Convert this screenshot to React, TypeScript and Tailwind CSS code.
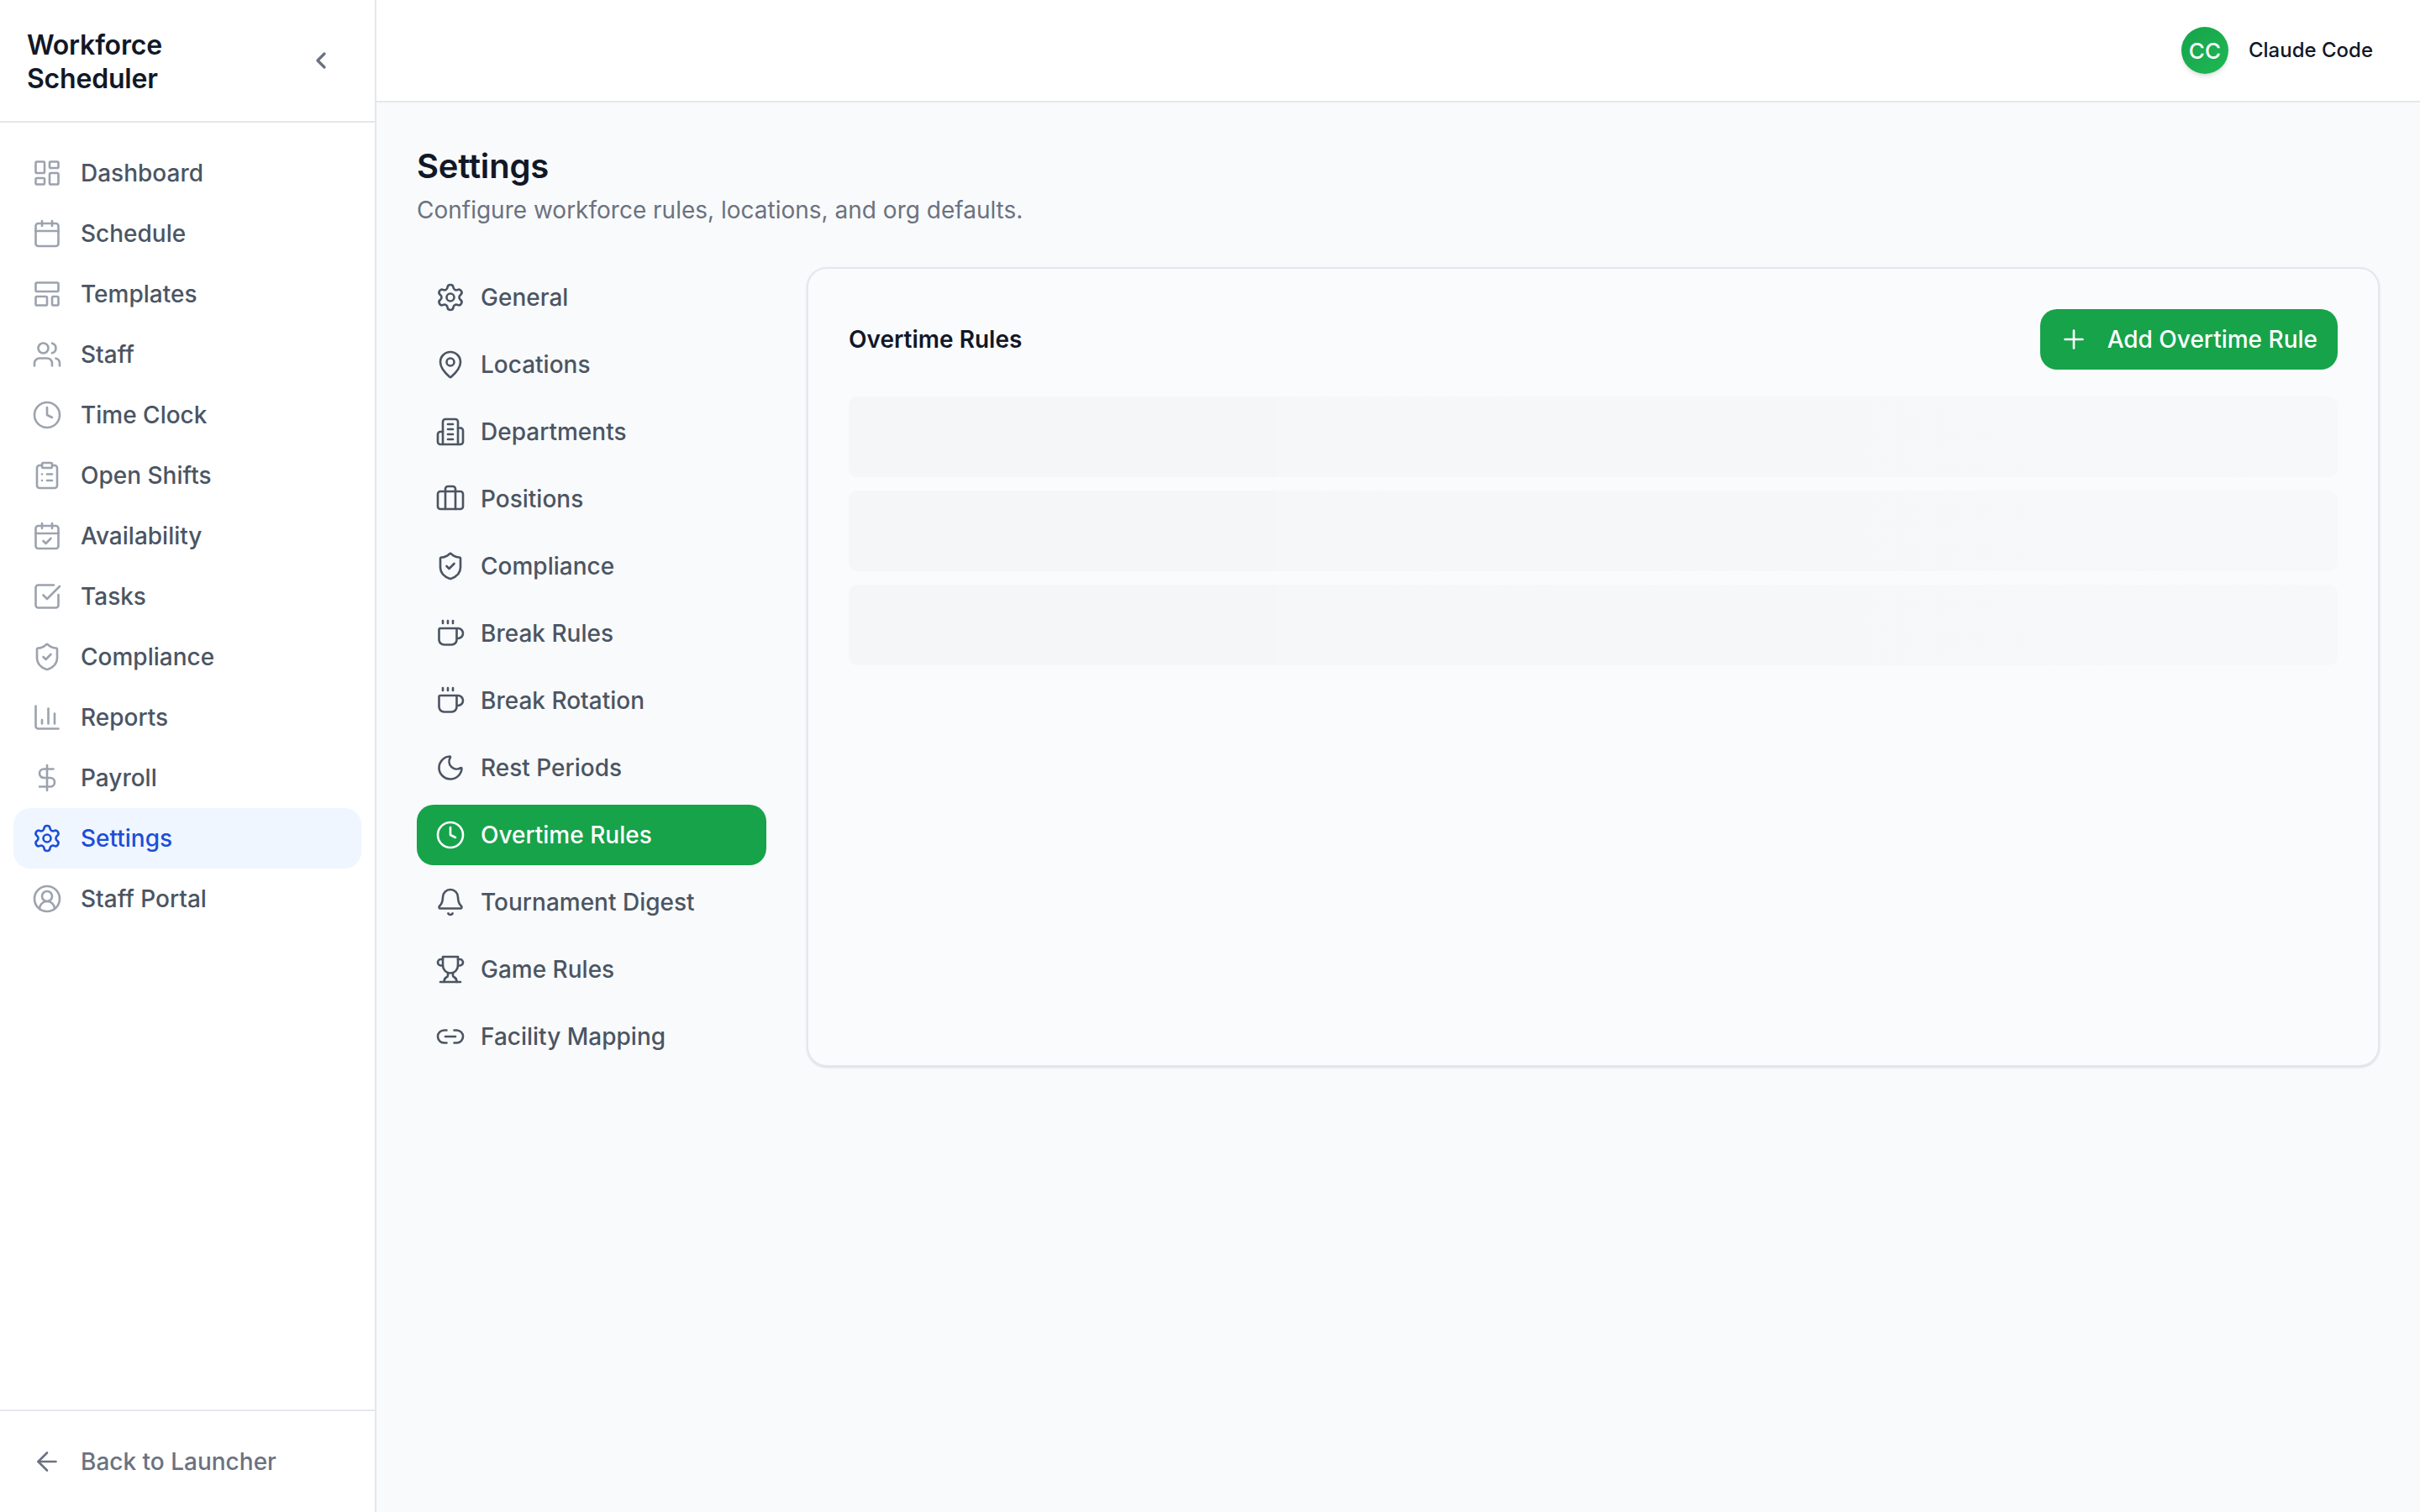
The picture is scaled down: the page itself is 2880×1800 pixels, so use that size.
import {
  ArrowLeft,
  Bell,
  Briefcase,
  Calendar,
  CalendarCheck,
  ChartColumn,
  ChevronLeft,
  CircleUserRound,
  ClipboardList,
  Clock,
  Coffee,
  DollarSign,
  LayoutDashboard,
  LayoutTemplate,
  Link2,
  MapPin,
  Moon,
  Plus,
  Settings,
  ShieldCheck,
  SquareCheckBig,
  Users,
} from "lucide-react";

// older lucide shapes, the installed package has redrawn these two
function TowerIcon({ size = 36, strokeWidth = 2 }: { size?: number; strokeWidth?: number }) {
  return (
    <svg width={size} height={size} viewBox="0 0 24 24" fill="none" stroke="currentColor" strokeWidth={strokeWidth} strokeLinecap="round" strokeLinejoin="round">
      <path d="M6 22V4a2 2 0 0 1 2-2h8a2 2 0 0 1 2 2v18Z" />
      <path d="M6 12H4a2 2 0 0 0-2 2v6a2 2 0 0 0 2 2h2" />
      <path d="M18 9h2a2 2 0 0 1 2 2v9a2 2 0 0 1-2 2h-2" />
      <path d="M10 6h4" />
      <path d="M10 10h4" />
      <path d="M10 14h4" />
      <path d="M10 18h4" />
    </svg>
  );
}

function CupIcon({ size = 36, strokeWidth = 2 }: { size?: number; strokeWidth?: number }) {
  return (
    <svg width={size} height={size} viewBox="0 0 24 24" fill="none" stroke="currentColor" strokeWidth={strokeWidth} strokeLinecap="round" strokeLinejoin="round">
      <path d="M6 9H4.5a2.5 2.5 0 0 1 0-5H6" />
      <path d="M18 9h1.5a2.5 2.5 0 0 0 0-5H18" />
      <path d="M4 22h16" />
      <path d="M10 14.66V17c0 .55-.47.98-.97 1.21C7.85 18.75 7 20.24 7 22" />
      <path d="M14 14.66V17c0 .55.47.98.97 1.21C16.15 18.75 17 20.24 17 22" />
      <path d="M18 2H6v7a6 6 0 0 0 12 0V2Z" />
    </svg>
  );
}

const navItems = [
  { label: "Dashboard", icon: LayoutDashboard },
  { label: "Schedule", icon: Calendar },
  { label: "Templates", icon: LayoutTemplate },
  { label: "Staff", icon: Users },
  { label: "Time Clock", icon: Clock },
  { label: "Open Shifts", icon: ClipboardList },
  { label: "Availability", icon: CalendarCheck },
  { label: "Tasks", icon: SquareCheckBig },
  { label: "Compliance", icon: ShieldCheck },
  { label: "Reports", icon: ChartColumn },
  { label: "Payroll", icon: DollarSign },
  { label: "Settings", icon: Settings, active: true },
  { label: "Staff Portal", icon: CircleUserRound },
];

const tabs = [
  { label: "General", icon: Settings },
  { label: "Locations", icon: MapPin },
  { label: "Departments", icon: TowerIcon },
  { label: "Positions", icon: Briefcase },
  { label: "Compliance", icon: ShieldCheck },
  { label: "Break Rules", icon: Coffee },
  { label: "Break Rotation", icon: Coffee },
  { label: "Rest Periods", icon: Moon },
  { label: "Overtime Rules", icon: Clock, active: true },
  { label: "Tournament Digest", icon: Bell },
  { label: "Game Rules", icon: CupIcon },
  { label: "Facility Mapping", icon: Link2 },
];

export default function App() {
  return (
    <div className="flex h-[1800px] w-[2880px] overflow-hidden bg-[#f9fafb] font-['Inter',sans-serif] antialiased">
      {/* SIDEBAR */}
      <aside className="flex h-full w-[448px] shrink-0 flex-col border-r-2 border-[#e5e7eb] bg-white">
        <div className="flex h-[146px] items-center justify-between border-b-2 border-[#e5e7eb] px-8">
          <h1 className="w-[220px] pt-1 text-[32px] leading-[40px] font-semibold tracking-[-0.2px] text-[#111827]">
            Workforce Scheduler
          </h1>
          <button className="rounded-2xl p-4 text-[#6b7280]">
            <ChevronLeft size={32} strokeWidth={2.5} />
          </button>
        </div>

        <nav className="flex-1 px-4 py-6">
          {navItems.map((item) => (
            <div
              key={item.label}
              className={
                item.active
                  ? "flex h-[72px] items-center gap-[22px] rounded-[20px] bg-[#eff6ff] px-[22px] text-[28px] font-medium text-[#1d4ed8]"
                  : "flex h-[72px] items-center gap-[22px] rounded-[20px] px-[22px] text-[28px] font-medium text-[#4b5563]"
              }
            >
              <item.icon
                size={36}
                strokeWidth={1.75}
                className={item.active ? "text-[#1d4ed8]" : "text-[#9ca3af]"}
              />
              {item.label}
            </div>
          ))}
        </nav>

        <div className="border-t-2 border-[#e5e7eb] px-4 py-6">
          <div className="flex h-[72px] items-center gap-[22px] px-[22px] text-[28px] font-medium text-[#6b7280]">
            <ArrowLeft size={36} strokeWidth={1.75} />
            Back to Launcher
          </div>
        </div>
      </aside>

      <div className="flex min-w-0 flex-1 flex-col">
        {/* HEADER */}
        <header className="flex h-[122px] items-center justify-end gap-6 border-b-2 border-[#e5e7eb] bg-white px-[56px]">
          <div className="flex h-14 w-14 items-center justify-center rounded-full bg-gradient-to-br from-[#16a34a] to-[#1fb855] text-[26px] font-medium text-white shadow-md">
            CC
          </div>
          <span className="text-[24px] font-medium text-[#111827]">
            Claude Code
          </span>
        </header>

        {/* CONTENT */}
        <main className="flex-1 p-12">
          <h2 className="text-[40px] leading-[56px] font-semibold tracking-[-0.2px] text-[#111827]">
            Settings
          </h2>
          <p className="mt-1 text-[28px] leading-[40px] text-[#6b7280]">
            Configure workforce rules, locations, and org defaults.
          </p>

          <div className="mt-12 flex items-start gap-12">
            <div className="flex w-[416px] shrink-0 flex-col gap-2">
              {tabs.map((tab) => (
                <div
                  key={tab.label}
                  className={
                    tab.active
                      ? "flex h-[72px] items-center gap-[18px] rounded-[20px] bg-[#16a34a] px-[22px] text-[28px] font-medium text-white"
                      : "flex h-[72px] items-center gap-[18px] rounded-[20px] px-[22px] text-[28px] font-medium text-[#4b5563]"
                  }
                >
                  <tab.icon size={36} strokeWidth={1.75} />
                  {tab.label}
                </div>
              ))}
            </div>

            <section className="h-[952px] flex-1 rounded-3xl border-2 border-[#e2e8f0] bg-[#fafbfd] p-12 shadow-sm">
              <div className="mb-8 flex items-center justify-between">
                <h3 className="text-[28px] font-semibold text-[#111827]">
                  Overtime Rules
                </h3>
                <button className="flex h-[72px] items-center gap-[22px] rounded-[20px] bg-[#16a34a] pr-6 pl-[22px] text-[28px] font-medium text-white">
                  <Plus size={36} strokeWidth={1.75} />
                  Add Overtime Rule
                </button>
              </div>
              <div className="flex flex-col gap-4">
                <div className="h-24 rounded-[10px] bg-[linear-gradient(90deg,#f5f6f8_0%,#f5f6f8_28.8%,#f6f7f9_28.8%,#f7f8fa_100%)]" />
                <div className="h-24 rounded-[10px] bg-[linear-gradient(90deg,#f5f6f8_0%,#f5f6f8_28.8%,#f6f7f9_28.8%,#f7f8fa_100%)]" />
                <div className="h-24 rounded-[10px] bg-[linear-gradient(90deg,#f5f6f8_0%,#f5f6f8_28.8%,#f6f7f9_28.8%,#f7f8fa_100%)]" />
              </div>
            </section>
          </div>
        </main>
      </div>
    </div>
  );
}
